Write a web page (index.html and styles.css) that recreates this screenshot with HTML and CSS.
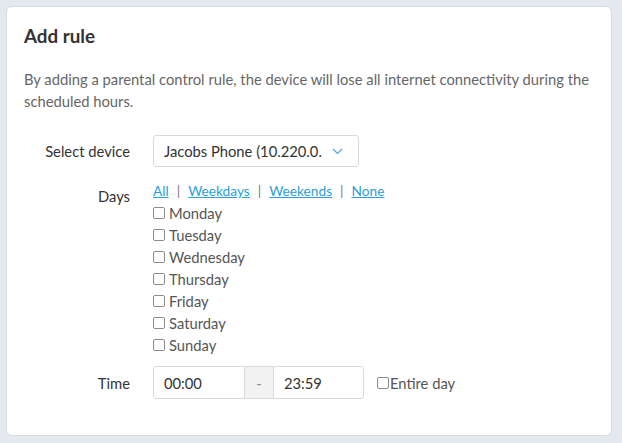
FILE: index.html
```html
<!DOCTYPE html>
<html>
<head>
<meta charset="utf-8">
<link rel="stylesheet" href="styles.css">
</head>
<body>
<div class="card">
  <h2 class="title">Add rule</h2>
  <p class="desc">By adding a parental control rule, the device will lose all internet connectivity during the scheduled hours.</p>
  <div class="form">
    <div class="row row-select">
      <label class="label">Select device</label>
      <div class="select">
        <span class="select-text">Jacobs Phone (10.220.0.</span>
        <svg class="chev" width="11" height="7" viewBox="0 0 11 7"><path d="M1 1l4.5 4.5L10 1" fill="none" stroke="#4aa8d8" stroke-width="1.2"/></svg>
      </div>
    </div>
    <div class="row row-days">
      <label class="label label-days">Days</label>
      <div class="days">
        <div class="links"><a href="#">All</a><span class="sep">|</span><a href="#">Weekdays</a><span class="sep">|</span><a href="#">Weekends</a><span class="sep">|</span><a href="#">None</a></div>
        <label class="day"><span class="box"></span>Monday</label>
        <label class="day"><span class="box"></span>Tuesday</label>
        <label class="day"><span class="box"></span>Wednesday</label>
        <label class="day"><span class="box"></span>Thursday</label>
        <label class="day"><span class="box"></span>Friday</label>
        <label class="day"><span class="box"></span>Saturday</label>
        <label class="day"><span class="box"></span>Sunday</label>
      </div>
    </div>
    <div class="row row-time">
      <label class="label">Time</label>
      <div class="time">
        <div class="group">
          <span class="inp inp-a">00:00</span>
          <span class="addon">-</span>
          <span class="inp inp-b">23:59</span>
        </div>
        <label class="entire"><span class="box"></span>Entire day</label>
      </div>
    </div>
  </div>
</div>
</body>
</html>
```

FILE: styles.css
```css
* { box-sizing: border-box; }
html, body { margin: 0; padding: 0; }
body {
  background: #e4e8ef;
  font-family: Lato, "Open Sans", sans-serif;
  color: #333;
  padding: 6px 10px 7px 6px;
}
.card {
  background: #fff;
  border: 1px solid #d6dae1;
  border-radius: 6px;
  padding: 18px 17px 36px 17px;
  height: 430px;
}
.title {
  margin: 0;
  font-size: 18.8px;
  line-height: 22px;
  font-weight: 700;
  color: #333;
}
.desc {
  margin: 21px 0 0 0;
  font-size: 14.75px;
  line-height: 22px;
  color: #666;
}
.form { margin-top: 23px; }
.row {
  display: grid;
  grid-template-columns: 106px auto;
  column-gap: 23px;
  align-items: center;
}
.label {
  text-align: right;
  font-size: 14.75px;
  color: #333;
}
.row-days { margin-top: 13px; align-items: start; }
.label-days { padding-top: 5px; line-height: 22px; }
.row-time { margin-top: 10px; }
.select {
  width: 206px;
  height: 32px;
  border: 1px solid #d9d9d9;
  border-radius: 3px;
  display: flex;
  align-items: center;
  padding: 0 15px 0 10px;
  font-size: 14.75px;
  color: #333;
}
.select-text { flex: 1; white-space: nowrap; overflow: hidden; }
.chev { display: block; }
.links {
  font-size: 13.7px;
  line-height: 22px;
  display: flex;
  align-items: center;
}
.links a { color: #2aa0d8; text-decoration: underline; }
.sep { color: #777; margin: 0 8px; }
.day {
  display: flex;
  align-items: center;
  font-size: 14.75px;
  line-height: 22px;
  color: #555;
}
.box {
  display: inline-block;
  width: 12px;
  height: 12px;
  border: 1px solid #8a8a8a;
  border-radius: 2px;
  margin-right: 4px;
  background: #fff;
  flex: none;
}
.time { display: flex; align-items: center; }
.group { display: flex; height: 33px; }
.inp {
  display: flex;
  align-items: center;
  border: 1px solid #d9d9d9;
  padding-left: 10px;
  font-size: 14.75px;
  color: #333;
}
.inp-a { width: 92px; border-radius: 3px 0 0 3px; }
.inp-b { width: 91px; border-radius: 0 3px 3px 0; }
.addon {
  width: 28px;
  display: flex;
  align-items: center;
  justify-content: center;
  background: #f2f2f2;
  border-top: 1px solid #d9d9d9;
  border-bottom: 1px solid #d9d9d9;
  color: #888;
  font-size: 14.75px;
}
.entire {
  margin-left: 13px;
  display: flex;
  align-items: center;
  font-size: 14.75px;
  color: #555;
}
.entire .box { margin-right: 1px; }
```
